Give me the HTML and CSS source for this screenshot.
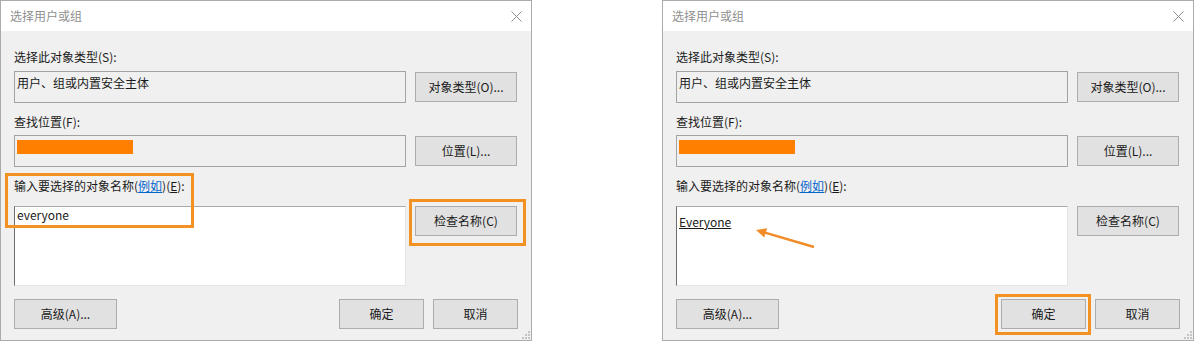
FILE: index.html
```html
<!DOCTYPE html>
<html lang="zh-CN">
<head>
  <meta charset="UTF-8">
  <meta name="viewport" content="width=device-width, initial-scale=1.0">
  <title>选择用户或组</title>
  <link rel="stylesheet" href="styles.css">
</head>
<body>
  <div class="shots">

    <!-- before: name typed -->
    <div class="dialog">
      <div class="titlebar">
        <span class="title">选择用户或组</span>
        <svg class="close" width="11" height="11" viewBox="0 0 11 11"><path d="M0.5 0.5L10.5 10.5M10.5 0.5L0.5 10.5" stroke="#8e8e8e" stroke-width="1" fill="none"/></svg>
      </div>
      <div class="content">
        <div class="label label-first">选择此对象类型(S):</div>
        <div class="pair">
          <div class="field">用户、组或内置安全主体</div>
          <div class="btn">对象类型(O)...</div>
        </div>
        <div class="label">查找位置(F):</div>
        <div class="pair pair-loc">
          <div class="field"><div class="redact"></div></div>
          <div class="btn">位置(L)...</div>
        </div>
        <div class="label label-names">输入要选择的对象名称(<a class="link">例如</a>)(<u>E</u>):</div>
        <div class="pair pair-names">
          <div class="names">everyone</div>
          <div class="btn">检查名称(C)</div>
        </div>
        <div class="actions">
          <div class="btn btn-adv">高级(A)...</div>
          <div class="action-group">
            <div class="btn btn-ok">确定</div>
            <div class="btn btn-ok">取消</div>
          </div>
        </div>
      </div>
      <div class="mark mark-label"></div>
      <div class="mark mark-check"></div>
      <svg class="grip" width="8" height="8" viewBox="0 0 8 8"><rect x="6" y="0" width="2" height="2" fill="#c4c4c4"/><rect x="3" y="3" width="2" height="2" fill="#c4c4c4"/><rect x="6" y="3" width="2" height="2" fill="#c4c4c4"/><rect x="0" y="6" width="2" height="2" fill="#c4c4c4"/><rect x="3" y="6" width="2" height="2" fill="#c4c4c4"/><rect x="6" y="6" width="2" height="2" fill="#c4c4c4"/></svg>
    </div>

    <!-- after: name resolved -->
    <div class="dialog resolved">
      <div class="titlebar">
        <span class="title">选择用户或组</span>
        <svg class="close" width="11" height="11" viewBox="0 0 11 11"><path d="M0.5 0.5L10.5 10.5M10.5 0.5L0.5 10.5" stroke="#8e8e8e" stroke-width="1" fill="none"/></svg>
      </div>
      <div class="content">
        <div class="label label-first">选择此对象类型(S):</div>
        <div class="pair">
          <div class="field">用户、组或内置安全主体</div>
          <div class="btn">对象类型(O)...</div>
        </div>
        <div class="label">查找位置(F):</div>
        <div class="pair pair-loc">
          <div class="field"><div class="redact"></div></div>
          <div class="btn">位置(L)...</div>
        </div>
        <div class="label label-names">输入要选择的对象名称(<a class="link">例如</a>)(<u>E</u>):</div>
        <div class="pair pair-names">
          <div class="names"><u>Everyone</u></div>
          <div class="btn">检查名称(C)</div>
        </div>
        <div class="actions">
          <div class="btn btn-adv">高级(A)...</div>
          <div class="action-group">
            <div class="btn btn-ok">确定</div>
            <div class="btn btn-ok">取消</div>
          </div>
        </div>
      </div>
      <div class="mark mark-ok"></div>
      <svg class="arrow" width="70" height="32" viewBox="0 0 70 32"><path d="M62 25L13 10.6" stroke="#f28c28" stroke-width="2.4" fill="none"/><path d="M4 8L15.2 6.2L12.2 15.4Z" fill="#f28c28"/></svg>
      <svg class="grip" width="8" height="8" viewBox="0 0 8 8"><rect x="6" y="0" width="2" height="2" fill="#c4c4c4"/><rect x="3" y="3" width="2" height="2" fill="#c4c4c4"/><rect x="6" y="3" width="2" height="2" fill="#c4c4c4"/><rect x="0" y="6" width="2" height="2" fill="#c4c4c4"/><rect x="3" y="6" width="2" height="2" fill="#c4c4c4"/><rect x="6" y="6" width="2" height="2" fill="#c4c4c4"/></svg>
    </div>

  </div>
</body>
</html>
```

FILE: styles.css
```css
body {
  margin: 0;
  background: #fff;
  font-family: "Noto Sans CJK SC", "Liberation Sans", sans-serif;
  font-size: 12px;
  color: #1a1a1a;
}
.shots {
  display: flex;
  gap: 130px;
  width: 1194px;
  height: 342px;
  overflow: hidden;
}
.dialog {
  position: relative;
  flex: 0 0 532px;
  height: 341px;
  box-sizing: border-box;
  border: 1px solid #ababab;
  background: #f0f0f0;
}
.titlebar {
  height: 30px;
  background: #fff;
  display: flex;
  align-items: center;
  justify-content: space-between;
  padding: 0 9px 0 9px;
}
.title {
  color: #8f8f8f;
  font-size: 12px;
  line-height: 16px;
}
.close {
  display: block;
}
.content {
  padding: 0 13px;
}
.label {
  height: 16px;
  line-height: 16px;
  margin-top: 11px;
}
.label-first {
  margin-top: 18px;
}
.label u {
  text-decoration: underline;
}
.link {
  color: #0066cc;
  text-decoration: underline;
}
.pair {
  display: flex;
  gap: 9px;
  align-items: center;
  margin-top: 6px;
}
.pair-loc {
  margin-top: 5px;
}
.pair-names {
  margin-top: 12px;
  align-items: flex-start;
}
.field {
  width: 392px;
  height: 32px;
  box-sizing: border-box;
  border: 1px solid #a3a3a3;
  padding: 3px 2px;
  line-height: 16px;
}
.redact {
  width: 116px;
  height: 14px;
  margin-top: 1px;
  background: #ff8000;
}
.names {
  width: 392px;
  height: 80px;
  box-sizing: border-box;
  background: #fff;
  border-top: 1px solid #a9a9a9;
  border-left: 1px solid #6d6d6d;
  border-right: 1px solid #e6e6e6;
  border-bottom: 1px solid #e6e6e6;
  padding: 0 2px;
  line-height: 16px;
}
.resolved .names {
  padding-top: 7px;
}
.btn {
  width: 102px;
  height: 30px;
  box-sizing: border-box;
  background: #e1e1e1;
  border: 1px solid #adadad;
  display: flex;
  align-items: center;
  justify-content: center;
  line-height: 16px;
}
.actions {
  display: flex;
  justify-content: space-between;
  margin-top: 13px;
}
.btn-adv {
  width: 103px;
}
.action-group {
  display: flex;
  gap: 9px;
}
.btn-ok {
  width: 85px;
}
.mark {
  position: absolute;
  border: 3px solid #f39222;
  box-sizing: border-box;
}
.mark-label {
  left: 4px;
  top: 172px;
  width: 189px;
  height: 55px;
}
.mark-check {
  left: 408px;
  top: 198px;
  width: 117px;
  height: 47px;
}
.mark-ok {
  left: 332px;
  top: 293px;
  width: 96px;
  height: 41px;
}
.arrow {
  position: absolute;
  left: 89px;
  top: 221px;
}
.grip {
  position: absolute;
  right: 1px;
  bottom: 1px;
}
```
